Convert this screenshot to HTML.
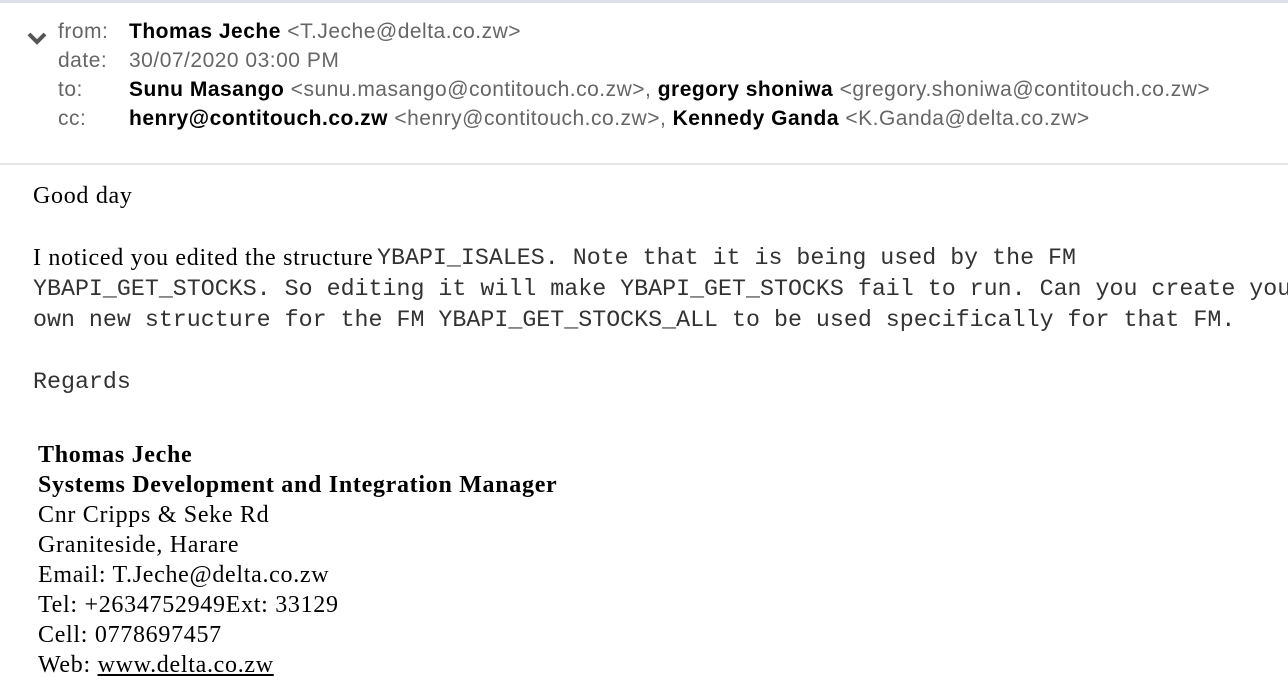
<!DOCTYPE html>
<html><head><meta charset="utf-8"><style>
body{margin:0;width:1288px;height:686px;overflow:hidden;background:#fff;position:relative}
.t{position:absolute;white-space:pre;line-height:1}
.h{font-family:"Liberation Sans",sans-serif;font-size:21px;letter-spacing:0.5px;color:#666}
.h b{color:#000}
.m{font-family:"Liberation Mono",monospace;font-size:23.3px;color:#333}
.s{font-family:"Liberation Serif",serif;font-size:24px;letter-spacing:0.7px;color:#000}
</style></head><body>
<div style="position:absolute;left:0;top:0;width:1288px;height:3px;background:#dde2ea"></div>
<div style="position:absolute;left:0;top:163px;width:1288px;height:2px;background:#e6e6e6"></div>
<svg style="position:absolute;left:27px;top:31px" width="20" height="14" viewBox="0 0 20 14"><path d="M2 3 L10 11 L18 3" stroke="#555" stroke-width="4" fill="none"/></svg>
<div class="t h" style="left:58px;top:21px">from:</div>
<div class="t h" style="left:58px;top:50px">date:</div>
<div class="t h" style="left:58px;top:79px">to:</div>
<div class="t h" style="left:58px;top:108px">cc:</div>
<div class="t h" style="left:129px;top:21px"><b>Thomas Jeche</b> &lt;T.Jeche@delta.co.zw&gt;</div>
<div class="t h" style="left:129px;top:50px">30/07/2020 03:00 PM</div>
<div class="t h" style="left:129px;top:79px"><b>Sunu Masango</b> &lt;sunu.masango@contitouch.co.zw&gt;, <b>gregory shoniwa</b> &lt;gregory.shoniwa@contitouch.co.zw&gt;</div>
<div class="t h" style="left:129px;top:108px"><b>henry@contitouch.co.zw</b> &lt;henry@contitouch.co.zw&gt;, <b>Kennedy Ganda</b> &lt;K.Ganda@delta.co.zw&gt;</div>
<div class="t s" style="left:33px;top:184px">Good day</div>
<div class="t s" style="left:33px;top:246px">I noticed you edited the structure</div>
<div class="t m" style="left:377px;top:247px">YBAPI_ISALES. Note that it is being used by the FM</div>
<div class="t m" style="left:33px;top:278px">YBAPI_GET_STOCKS. So editing it will make YBAPI_GET_STOCKS fail to run. Can you create your</div>
<div class="t m" style="left:33px;top:309px">own new structure for the FM YBAPI_GET_STOCKS_ALL to be used specifically for that FM.</div>
<div class="t m" style="left:33px;top:371px">Regards</div>
<div class="t s" style="left:38px;top:443px;font-weight:bold">Thomas Jeche</div>
<div class="t s" style="left:38px;top:473px;font-weight:bold">Systems Development and Integration Manager</div>
<div class="t s" style="left:38px;top:503px">Cnr Cripps &amp; Seke Rd</div>
<div class="t s" style="left:38px;top:533px">Graniteside, Harare</div>
<div class="t s" style="left:38px;top:563px">Email: T.Jeche@delta.co.zw</div>
<div class="t s" style="left:38px;top:593px">Tel: +2634752949Ext: 33129</div>
<div class="t s" style="left:38px;top:623px">Cell: 0778697457</div>
<div class="t s" style="left:38px;top:653px">Web: <u>www.delta.co.zw</u></div>
</body></html>
